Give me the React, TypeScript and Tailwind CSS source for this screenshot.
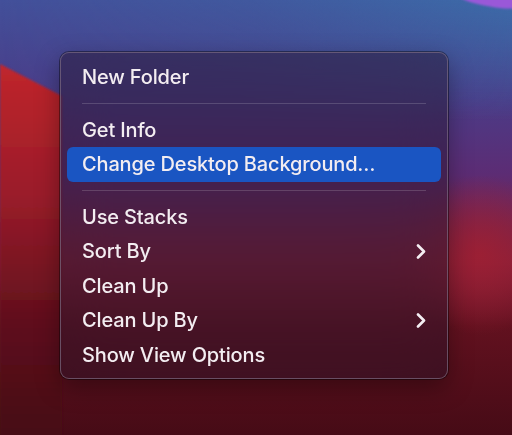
import React from "react";

function Chevron() {
  return (
    <svg width="10" height="15" viewBox="0 0 10 15" className="shrink-0">
      <path d="M2 1.5 L8 7.5 L2 13.5" fill="none" stroke="#f4eef2" strokeWidth="2.6" strokeLinecap="round" strokeLinejoin="round" />
    </svg>
  );
}

function Wallpaper() {
  return (
    <svg className="absolute inset-0" width="512" height="435" viewBox="0 0 512 435">
      <defs>
        <linearGradient id="base" x1="0" y1="0" x2="0" y2="1">
          <stop offset="0" stopColor="#43509a" />
          <stop offset="0.22" stopColor="#4a3c88" />
          <stop offset="0.4" stopColor="#5c2c74" />
          <stop offset="0.52" stopColor="#74244e" />
          <stop offset="0.6" stopColor="#85203a" />
          <stop offset="0.75" stopColor="#62111f" />
          <stop offset="1" stopColor="#460b16" />
        </linearGradient>
        <linearGradient id="tr" x1="0" y1="0" x2="0" y2="1">
          <stop offset="0" stopColor="#3a74ad" stopOpacity="0.75" />
          <stop offset="1" stopColor="#3a74ad" stopOpacity="0" />
        </linearGradient>
        <linearGradient id="trh" x1="0" y1="0" x2="1" y2="0">
          <stop offset="0" stopColor="#000" />
          <stop offset="0.5" stopColor="#555" />
          <stop offset="1" stopColor="#fff" />
        </linearGradient>
        <mask id="m">
          <rect width="512" height="435" fill="url(#trh)" />
        </mask>
        <linearGradient id="red" x1="0" y1="0" x2="0" y2="1">
          <stop offset="0" stopColor="#c0262d" />
          <stop offset="0.35" stopColor="#9a1c2a" />
          <stop offset="0.7" stopColor="#5e0f1c" />
          <stop offset="1" stopColor="#450b15" />
        </linearGradient>
        <radialGradient id="glow" cx="480" cy="255" r="80" gradientUnits="userSpaceOnUse">
          <stop offset="0" stopColor="#9e1f33" stopOpacity="0.9" />
          <stop offset="1" stopColor="#9e1f33" stopOpacity="0" />
        </radialGradient>
        <filter id="soft" x="-20%" y="-20%" width="140%" height="140%">
          <feGaussianBlur stdDeviation="1" />
        </filter>
      </defs>
      <rect width="512" height="435" fill="url(#base)" />
      <rect width="512" height="120" fill="url(#tr)" mask="url(#m)" />
      <path d="M0 64 L 62 96 L 62 440 L0 440 Z" fill="url(#red)" filter="url(#soft)" />
      <rect width="512" height="435" fill="url(#glow)" />
      <ellipse cx="522" cy="-12" rx="70" ry="21" fill="#9a58d8" filter="url(#soft)" />
    </svg>
  );
}

function Sep() {
  return (
    <div className="h-[18px] flex items-center px-[15px]">
      <div className="h-px w-full bg-[#ffffff]/[0.16]" />
    </div>
  );
}

function Item({ label, sub, active }: { label: string; sub?: boolean; active?: boolean }) {
  return (
    <div
      className={
        "h-[34.5px] flex items-center justify-between pl-[15px] pr-[15px] rounded-[6px] " +
        (active ? "bg-[#1a55c2]" : "")
      }
    >
      <span className="text-[20px] leading-none font-medium tracking-[-0.15px] text-[#f3edf1]">{label}</span>
      {sub ? <Chevron /> : null}
    </div>
  );
}

export default function App() {
  return (
    <div
      className="relative w-[512px] h-[435px] overflow-hidden"
      style={{ fontFamily: "Inter, 'Noto Sans', sans-serif" }}
    >
      <Wallpaper />
      <div className="absolute left-[60px] top-[52px] w-[388px] h-[327px] rounded-[9px] border border-[#7a6a80]/70 ring-1 ring-black/40 bg-[#24142a]/45 backdrop-blur-xl shadow-[0_8px_24px_rgba(0,0,0,0.35)] px-[6px] pt-[7px]">
        <Item label="New Folder" />
        <Sep />
        <Item label="Get Info" />
        <Item label="Change Desktop Background…" active />
        <Sep />
        <Item label="Use Stacks" />
        <Item label="Sort By" sub />
        <Item label="Clean Up" />
        <Item label="Clean Up By" sub />
        <Item label="Show View Options" />
      </div>
    </div>
  );
}
